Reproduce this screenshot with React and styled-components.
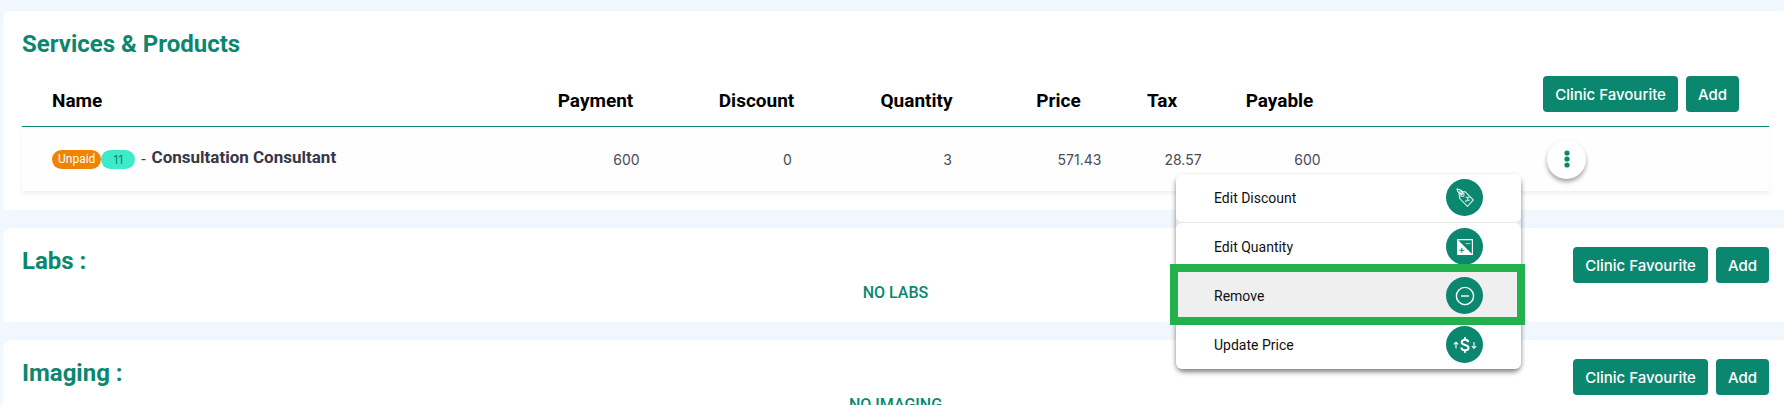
import React from "react";
import styled, { createGlobalStyle } from "styled-components";

const GREEN = "#0b8770";

const GlobalStyle = createGlobalStyle`
  *, *::before, *::after { box-sizing: border-box; }
  body {
    margin: 0;
    overflow-x: hidden;
    background: #f0f7ff;
    font-family: Roboto, "Liberation Sans", sans-serif;
    color: #37374a;
  }
  button { font-family: inherit; cursor: pointer; }
`;

const Page = styled.main`
  display: flex;
  flex-direction: column;
  gap: 18px;
  padding: 11px 0 18px 3px;
  margin-right: -4px;
`;

const Card = styled.section`
  padding: 19px;
  background: #fff;
  border-radius: 8px 8px 0 0;
`;

const CardHeader = styled.header`
  display: flex;
  justify-content: space-between;
  align-items: flex-start;
`;

const Title = styled.h2`
  margin: 0;
  font-size: 24px;
  line-height: 28px;
  font-weight: 700;
  color: ${GREEN};
`;

const Empty = styled.p`
  margin: 0;
  font-size: 16px;
  line-height: 20px;
  font-weight: 500;
  text-align: center;
  color: ${GREEN};
`;

const Actions = styled.div`
  display: flex;
  justify-content: flex-end;
  gap: 8px;
`;

const ActionButton = styled.button`
  height: 36px;
  padding: 0 12px;
  border: 0;
  border-radius: 4px;
  background: ${GREEN};
  color: #fff;
  font-family: Inter, sans-serif;
  font-size: 15px;
  font-weight: 500;
  white-space: nowrap;
`;

const Table = styled.table`
  width: 100%;
  margin-top: 18px;
  table-layout: fixed;
  border-spacing: 0;
`;

const Col = styled.col`
  width: ${({ $width }) => $width};
`;

const HeadCell = styled.th`
  padding: 0 0 14px;
  border-bottom: 1px solid ${GREEN};
  vertical-align: bottom;
  text-align: center;
  font-size: 19px;
  line-height: 22px;
  font-weight: 700;
  color: #000;
`;

const NameHead = styled(HeadCell)`
  padding-left: 30px;
  text-align: left;
`;

const ActionsHead = styled(HeadCell)`
  padding-right: 30px;
`;

const Row = styled.tr`
  height: 64px;
  background: #fefefe;
  box-shadow: 0 3px 4px rgba(0, 0, 0, 0.06);
`;

const NameCell = styled.td`
  padding: 0 0 0 30px;
`;

const NameLine = styled.div`
  display: flex;
  align-items: center;
`;

const Badge = styled.span`
  height: 19px;
  padding: 0 ${({ $pad }) => $pad};
  border-radius: 10px;
  background: ${({ $bg }) => $bg};
  color: ${({ $color }) => $color};
  font-family: ${({ $font }) => $font};
  font-size: 12px;
  line-height: 19px;
`;

const Dash = styled.span`
  margin: 0 6px;
  font-size: 16px;
`;

const ServiceName = styled.strong`
  padding-bottom: 4px;
  font-size: 17px;
  line-height: 20px;
  font-weight: 700;
`;

const ValueCell = styled.td`
  padding: 0 0 0 ${({ $shift }) => $shift};
  text-align: center;
  font-family: Inter, sans-serif;
  font-size: 14px;
  color: #4a4a58;
`;

const MenuCell = styled.td`
  padding: 0 183px 0 0;
`;

const MenuAnchor = styled.div`
  position: relative;
  width: 39px;
  margin-left: auto;
`;

const MenuTrigger = styled.button`
  display: flex;
  align-items: center;
  justify-content: center;
  width: 39px;
  height: 39px;
  padding: 0;
  border: 0;
  border-radius: 50%;
  background: #fff;
  box-shadow: 0 3px 4px rgba(0, 0, 0, 0.35);
`;

const Menu = styled.ul`
  position: absolute;
  z-index: 2;
  top: 34px;
  right: 65px;
  display: flex;
  flex-direction: column;
  gap: 1px;
  width: 345px;
  margin: 0;
  padding: 0;
  list-style: none;
  border-radius: 8px;
  background: #e8e8e8;
  box-shadow: 0 3px 5px rgba(0, 0, 0, 0.5);
`;

const MenuEntry = styled.li`
  position: relative;
  z-index: ${({ $marked }) => ($marked ? 1 : 0)};
`;

const MenuButton = styled.button`
  display: flex;
  align-items: center;
  justify-content: space-between;
  width: 100%;
  height: 48px;
  padding: 0 38px;
  border: 0;
  border-radius: 6px;
  background: ${({ $active }) => ($active ? "#efefef" : "#fff")};
  font-size: 14px;
  color: #111;
`;

const Marker = styled.span`
  position: absolute;
  inset: -8px -4px -5px -6px;
  border: 8px solid #22b14c;
  pointer-events: none;
`;

const IconDisc = styled.span`
  display: flex;
  align-items: center;
  justify-content: center;
  width: 37px;
  height: 37px;
  border-radius: 50%;
  background: ${GREEN};
`;

const Dots = () => (
  <svg width="6" height="18" viewBox="0 0 6 18" fill={GREEN} aria-hidden="true">
    <circle cx="3" cy="3" r="2.6" />
    <circle cx="3" cy="9" r="2.6" />
    <circle cx="3" cy="15" r="2.6" />
  </svg>
);

const TagIcon = () => (
  <svg width="24" height="24" viewBox="0 0 24 24" fill="none" stroke="#c9e6df" strokeWidth="1.2" strokeLinejoin="round" strokeLinecap="round" aria-hidden="true">
    <path d="M6 6.2 12 5.6 20.3 14 14.4 20.3 6.6 12.4Z" />
    <circle cx="9.4" cy="8.8" r="1.7" />
    <path d="M4 3c.4 2.4 2.2 4.6 5.2 5.6M4.2 3.2c2.8.3 4.7 1.3 5.5 3.5" stroke="#fff" />
    <path d="M13 11.2c1.2-.5 2.2.4 1.6 1.7-.6 1.3.8 2 2 1.2M12.4 15.2l1.6-.3M15.3 11.6l1-.8" />
    <path d="M21 3h.01M4 21h.01M21 21h.01" stroke="#4fa997" strokeWidth="0.8" />
  </svg>
);

const QuantityIcon = () => (
  <svg width="16" height="16" viewBox="0 0 16 16" fill="none" aria-hidden="true">
    <path d="M.6.6h14.800v14.800H.6z" stroke="#fff" strokeWidth="1.1" />
    <path d="M0 0 16 16H0z" fill="#fff" />
    <path d="M8.5 4.6h4.800" stroke="#a9d6cc" strokeWidth="1" />
    <path d="M2.3 11.3h5M4.8 8.8v5" stroke={GREEN} strokeWidth="1" />
  </svg>
);

const RemoveIcon = () => (
  <svg width="20" height="20" viewBox="0 0 20 20" fill="none" stroke="#fff" strokeWidth="1.4" aria-hidden="true">
    <circle cx="10" cy="10" r="8.6" />
    <path d="M6 10h8" />
  </svg>
);

const PriceIcon = () => (
  <svg width="24" height="18" viewBox="0 0 24 18" fill="none" stroke="#fff" aria-hidden="true">
    <path d="M15.4 6.2C15.2 4.5 13.9 3.7 12 3.7c-2 0-3.3.9-3.3 2.5 0 3.5 6.8 2 6.8 5.5 0 1.7-1.4 2.6-3.5 2.6-2.2 0-3.5-1-3.6-2.8M12 1.2v2.5M12 14.3v2.5" strokeWidth="2" />
    <path d="M3 12.5V6.2M.8 8.4 3 6.2l2.2 2.2M21 6v6.3M18.8 10.1 21 12.3l2.2-2.2" strokeWidth="1.1" />
  </svg>
);

const COLUMNS = [
  { label: "Payment", value: "600", width: "161px", shift: "62px" },
  { label: "Discount", value: "0", width: "161px", shift: "62px" },
  { label: "Quantity", value: "3", width: "159px", shift: "62px" },
  { label: "Price", value: "571.43", width: "125px", shift: "42px" },
  { label: "Tax", value: "28.57", width: "82px", shift: "42px" },
  { label: "Payable", value: "600", width: "153px", shift: "56px" },
];

const MENU = [
  { label: "Edit Discount", Icon: TagIcon },
  { label: "Edit Quantity", Icon: QuantityIcon },
  { label: "Remove", Icon: RemoveIcon, active: true },
  { label: "Update Price", Icon: PriceIcon },
];

const CardActions = () => (
  <Actions>
    <ActionButton type="button">Clinic Favourite</ActionButton>
    <ActionButton type="button">Add</ActionButton>
  </Actions>
);

const RowMenu = () => (
  <MenuAnchor>
    <MenuTrigger type="button" aria-label="Row actions" aria-haspopup="menu" aria-expanded="true">
      <Dots />
    </MenuTrigger>
    <Menu role="menu">
      {MENU.map(({ label, Icon, active }) => (
        <MenuEntry key={label} role="none" $marked={active}>
          <MenuButton type="button" role="menuitem" $active={active}>
            {label}
            <IconDisc>
              <Icon />
            </IconDisc>
          </MenuButton>
          {active && <Marker />}
        </MenuEntry>
      ))}
    </Menu>
  </MenuAnchor>
);

const EmptyCard = ({ title, message }) => (
  <Card>
    <CardHeader>
      <Title>{title}</Title>
      <CardActions />
    </CardHeader>
    <Empty>{message}</Empty>
  </Card>
);

export default function App() {
  return (
    <>
      <GlobalStyle />
      <Page>
        <Card>
          <Title>Services &amp; Products</Title>
          <Table>
            <colgroup>
              <Col $width="auto" />
              {COLUMNS.map((c) => (
                <Col key={c.label} $width={c.width} />
              ))}
              <Col $width="413px" />
            </colgroup>
            <thead>
              <tr>
                <NameHead scope="col">Name</NameHead>
                {COLUMNS.map((c) => (
                  <HeadCell key={c.label} scope="col">{c.label}</HeadCell>
                ))}
                <ActionsHead>
                  <CardActions />
                </ActionsHead>
              </tr>
            </thead>
            <tbody>
              <Row>
                <NameCell>
                  <NameLine>
                    <Badge $bg="#f08300" $color="#fff" $pad="6px" $font="Roboto, sans-serif">Unpaid</Badge>
                    <Badge $bg="#3debc8" $color={GREEN} $pad="12px" $font="Inter, sans-serif">11</Badge>
                    <Dash>-</Dash>
                    <ServiceName>Consultation Consultant</ServiceName>
                  </NameLine>
                </NameCell>
                {COLUMNS.map((c) => (
                  <ValueCell key={c.label} $shift={c.shift}>{c.value}</ValueCell>
                ))}
                <MenuCell>
                  <RowMenu />
                </MenuCell>
              </Row>
            </tbody>
          </Table>
        </Card>
        <EmptyCard title="Labs :" message="NO LABS" />
        <EmptyCard title="Imaging :" message="NO IMAGING" />
      </Page>
    </>
  );
}
